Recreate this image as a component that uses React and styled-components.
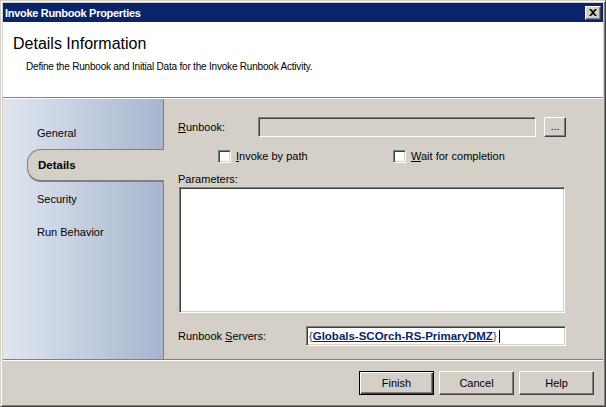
import React from 'react';
import styled, { createGlobalStyle, css } from 'styled-components';

const GlobalStyle = createGlobalStyle`
  html, body {
    margin: 0;
    padding: 0;
    background: #d4d0c8;
  }
  * {
    box-sizing: border-box;
  }
`;

const sunken = css`
  border: 1px solid;
  border-color: #808080 #ffffff #ffffff #808080;
  box-shadow: inset 1px 1px #404040, inset -1px -1px #d4d0c8;
`;

const raised = css`
  border: 1px solid;
  border-color: #ffffff #404040 #404040 #ffffff;
  box-shadow: inset -1px -1px #808080, inset 1px 1px #d4d0c8;
`;

const Window = styled.div`
  width: 606px;
  height: 407px;
  display: flex;
  flex-direction: column;
  padding: 2px;
  background: #d4d0c8;
  border: 1px solid;
  border-color: #d4d0c8 #404040 #404040 #d4d0c8;
  box-shadow: inset 1px 1px #ffffff, inset -1px -1px #808080;
  font-family: "Liberation Sans", Arial, sans-serif;
  font-size: 11px;
  color: #000;
`;

const TitleBar = styled.div`
  height: 19px;
  flex: none;
  display: flex;
  align-items: center;
  justify-content: space-between;
  padding: 0 2px 0 2px;
  background: #0a246a;
  color: #ffffff;
  font-weight: bold;
  letter-spacing: -0.3px;
`;

const CloseButton = styled.div`
  width: 16px;
  height: 14px;
  display: flex;
  align-items: center;
  justify-content: center;
  background: #d4d0c8;
  ${raised}
`;

const Header = styled.div`
  height: 75px;
  flex: none;
  background: #ffffff;
  padding: 13px 0 0 10px;
`;

const HeaderTitle = styled.div`
  font-size: 16px;
  line-height: 18px;
`;

const HeaderText = styled.div`
  margin: 8px 0 0 13px;
  font-size: 10px;
  line-height: 12px;
  letter-spacing: -0.2px;
`;

const Separator = styled.div`
  height: 2px;
  flex: none;
  border-top: 1px solid #808080;
  border-bottom: 1px solid #ffffff;
`;

const Body = styled.div`
  height: 260px;
  flex: none;
  display: flex;
`;

const Sidebar = styled.div`
  width: 161px;
  flex: none;
  padding-top: 17px;
  display: flex;
  flex-direction: column;
  background: linear-gradient(to right, #e0e6f0, #a6b6cf);
  border-right: 1px solid #7a8290;
`;

const NavItem = styled.div`
  height: 33px;
  display: flex;
  align-items: center;
  padding-left: ${p => (p.$active ? '10px' : '34px')};
  ${p =>
    p.$active &&
    css`
      position: relative;
      margin: 0 -1px 0 24px;
      font-weight: bold;
      font-size: 11.5px;
      background: #d4d0c8;
      border: 1px solid #808080;
      border-right: none;
      border-bottom: 2px solid #808080;
      border-radius: 14px 0 0 14px;
    `}
`;

const Content = styled.div`
  flex: 1;
  display: flex;
  flex-direction: column;
  padding: 18px 37px 0 14px;
`;

const Row = styled.div`
  display: flex;
  align-items: center;
  height: 20px;
`;

const Label = styled.div`
  width: ${p => p.$width}px;
  flex: none;
`;

const Field = styled.div`
  flex: 1;
  height: ${p => p.$height || 20}px;
  display: flex;
  align-items: center;
  padding-left: 2px;
  background: ${p => (p.$disabled ? '#d4d0c8' : '#ffffff')};
  ${sunken}
`;

const BrowseButton = styled.div`
  width: 22px;
  height: 20px;
  margin-left: 8px;
  display: flex;
  align-items: flex-end;
  justify-content: center;
  padding-bottom: 4px;
  font-size: 10px;
  line-height: 10px;
  background: #d4d0c8;
  ${raised}
`;

const CheckRow = styled.div`
  display: flex;
  margin: 12px 0 0 40px;
  height: 14px;
`;

const CheckItem = styled.label`
  display: flex;
  align-items: center;
  gap: 5px;
  width: ${p => p.$width}px;
`;

const CheckBox = styled.span`
  width: 13px;
  height: 13px;
  background: #ffffff;
  ${sunken}
`;

const ParamLabel = styled.div`
  margin-top: 10px;
  line-height: 13px;
`;

const ParamBox = styled.div`
  margin: 1px 1px 0 1px;
  height: 126px;
  background: #ffffff;
  ${sunken}
`;

const ServerRow = styled(Row)`
  margin-top: 13px;
`;

const Brace = styled.span`
  color: #404040;
`;

const VarToken = styled.span`
  color: #0a246a;
  font-weight: bold;
  font-size: 11.5px;
  text-decoration: underline;
`;

const Caret = styled.span`
  width: 1px;
  height: 13px;
  margin-left: 2px;
  background: #000;
`;

const Footer = styled.div`
  flex: 1;
  display: flex;
  justify-content: flex-end;
  align-items: flex-start;
  gap: 5px;
  padding: 10px 9px 0 0;
`;

const Button = styled.div`
  width: ${p => p.$width || 75}px;
  height: 24px;
  display: flex;
  align-items: center;
  justify-content: center;
  background: #d4d0c8;
  ${p =>
    p.$default
      ? css`
          border: 1px solid #000;
          box-shadow: inset 1px 1px #ffffff, inset -1px -1px #404040,
            inset -2px -2px #808080;
        `
      : raised}
`;

const U = styled.span`
  text-decoration: underline;
`;

const navItems = ['General', 'Details', 'Security', 'Run Behavior'];

export default function App() {
  return (
    <>
      <GlobalStyle />
      <Window>
        <TitleBar>
          <span>Invoke Runbook Properties</span>
          <CloseButton>
            <svg width="8" height="7" viewBox="0 0 8 7">
              <path d="M0 0h2l2 2 2-2h2L5 3.5 8 7H6L4 5 2 7H0l3-3.5z" fill="#000" />
            </svg>
          </CloseButton>
        </TitleBar>
        <Header>
          <HeaderTitle>Details Information</HeaderTitle>
          <HeaderText>Define the Runbook and Initial Data for the Invoke Runbook Activity.</HeaderText>
        </Header>
        <Separator />
        <Body>
          <Sidebar>
            {navItems.map(item => (
              <NavItem key={item} $active={item === 'Details'}>
                {item}
              </NavItem>
            ))}
          </Sidebar>
          <Content>
            <Row>
              <Label $width={80}>
                <U>R</U>unbook:
              </Label>
              <Field $disabled />
              <BrowseButton>...</BrowseButton>
            </Row>
            <CheckRow>
              <CheckItem $width={175}>
                <CheckBox />
                <span>
                  <U>I</U>nvoke by path
                </span>
              </CheckItem>
              <CheckItem $width={150}>
                <CheckBox />
                <span>
                  <U>W</U>ait for completion
                </span>
              </CheckItem>
            </CheckRow>
            <ParamLabel>Parameters:</ParamLabel>
            <ParamBox />
            <ServerRow>
              <Label $width={128}>
                Runbook <U>S</U>ervers:
              </Label>
              <Field>
                <Brace>{'{'}</Brace>
                <VarToken>Globals-SCOrch-RS-PrimaryDMZ</VarToken>
                <Brace>{'}'}</Brace>
                <Caret />
              </Field>
            </ServerRow>
          </Content>
        </Body>
        <Separator />
        <Footer>
          <Button $default>Finish</Button>
          <Button>Cancel</Button>
          <Button>Help</Button>
        </Footer>
      </Window>
    </>
  );
}
